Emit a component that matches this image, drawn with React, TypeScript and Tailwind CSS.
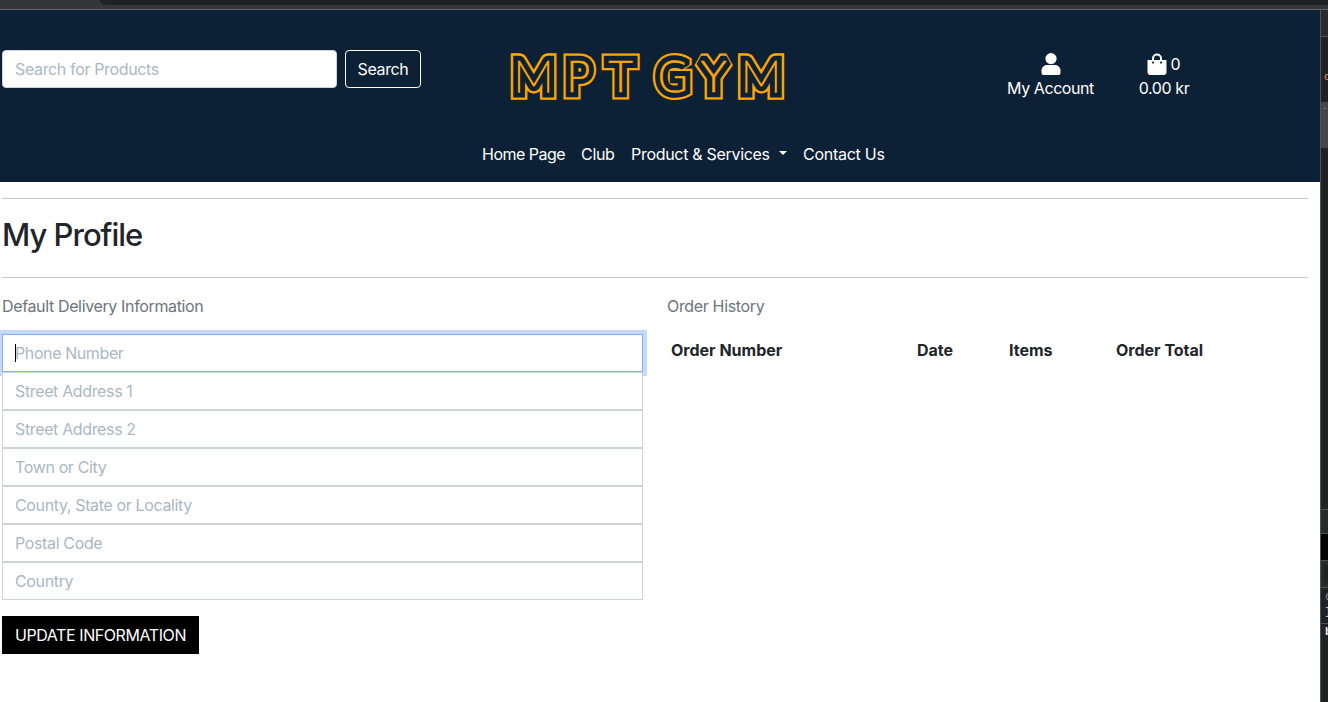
import React from "react";

const fields = ["Street Address 1", "Street Address 2", "Town or City", "County, State or Locality", "Postal Code", "Country"];

const letters = [
  { ch: "M", x: 533.5, font: "Lato", weight: 100, sx: 1.07, sy: 1.03, inner: 1.3 },
  { ch: "P", x: 578.5, font: "DejaVu Sans", weight: 200, sx: 1, sy: 1, inner: 0.5 },
  { ch: "T", x: 620.5, font: "DejaVu Sans", weight: 200, sx: 0.98, sy: 1, inner: 0.5 },
  { ch: "G", x: 673, font: "DejaVu Sans", weight: 200, sx: 1, sy: 1, inner: 0.5 },
  { ch: "Y", x: 713.5, font: "DejaVu Sans", weight: 200, sx: 1.06, sy: 1, inner: 0.5 },
  { ch: "M", x: 761, font: "Lato", weight: 100, sx: 1.08, sy: 1.03, inner: 1.3 },
];

function Logo() {
  return (
    <svg width="290" height="60" viewBox="503 46 290 60" role="img" aria-label="MPT GYM" fontSize="42" textAnchor="middle">
      {letters.map((l, i) => (
        <g key={i} transform={`translate(${l.x} 91.7) scale(${l.sx} ${l.sy})`} fontFamily={l.font} fontWeight={l.weight} strokeLinejoin="miter" strokeMiterlimit="1.5">
          <text fill="#ffa500" stroke="#ffa500" strokeWidth="15">{l.ch}</text>
          <text fill="#0c2135" stroke="#0c2135" strokeWidth="10.500">{l.ch}</text>
          <text fill="#ffa500" stroke="#ffa500" strokeWidth={l.inner}>{l.ch}</text>
        </g>
      ))}
    </svg>
  );
}

function Header() {
  return (
    <header className="h-[172px] bg-[#0c2135] text-white">
      <div className="flex h-[120px] items-start">
        <div className="flex w-[503px] gap-2 pl-0.5 pt-10">
          <input placeholder="Search for Products" className="h-[38px] w-[335px] rounded border border-[#ced4da] bg-white px-3 tracking-[-0.36px] placeholder:text-[#aab7c4] placeholder:opacity-100" />
          <button className="h-[38px] w-[76px] rounded border border-white tracking-[-0.36px]">Search</button>
        </div>
        <div className="w-[290px] pt-9"><Logo /></div>
        <div className="flex pl-[197px] pt-[42px] text-center leading-6">
          <div className="flex w-[121px] flex-col items-center">
            <svg width="20" height="24" viewBox="0 0 20 24" fill="currentColor"><circle cx="10" cy="6.600" r="5.600" /><path d="M6 13h8c3 0 5.500 2.500 5.500 5.500V21q0 2-2 2h-15q-2 0-2-2v-2.500C.5 15.500 3 13 6 13Z" /></svg>
            <span className="tracking-[-0.42px]">My Account</span>
          </div>
          <div className="flex w-[106px] flex-col items-center">
            <span className="flex items-center gap-[3px]"><svg width="20" height="24" viewBox="0 0 20 24" fill="currentColor"><path fillRule="evenodd" d="M.5 8H5V6.500a5 5 0 0 1 10 0V8h4.500v12q0 3-3 3h-13q-3 0-3-3ZM7 8h6V6.500a3 3 0 0 0-6 0ZM6 9.500a1 1 0 1 0 .01 0ZM14 9.500a1 1 0 1 0 .01 0Z" /></svg>0</span>
            <span className="tracking-[-0.4px]">0.00 kr</span>
          </div>
        </div>
      </div>
      <nav className="flex gap-4 pl-[482px] pt-3 leading-6 whitespace-nowrap">
        <a className="w-[83px] tracking-[-0.5px]">Home Page</a>
        <a className="w-[34px] tracking-[-0.3px]">Club</a>
        <a className="flex w-[156px] items-center justify-between tracking-[-0.3px]">Product &amp; Services<span className="mb-0.5 border-x-[4.800px] border-t-[4.800px] border-x-transparent" /></a>
        <a className="tracking-[-0.26px]">Contact Us</a>
      </nav>
    </header>
  );
}

function Profile() {
  return (
    <main className="pl-0.5 pr-3 pt-4 text-[#212529]">
      <hr className="border-[#c8c8c9]" />
      <h2 className="mt-4 h-[62px] text-[31px] leading-[40px] font-medium tracking-[-1px]">My Profile</h2>
      <hr className="border-[#c8c8c9]" />
      <div className="flex pt-4">
        <section className="w-[641px]">
          <p className="mb-4 leading-6 tracking-[-0.36px] text-[#6c757d]">Default Delivery Information</p>
          <div className="relative flex h-[38px] items-center border border-[#80b0fe] bg-white px-3 shadow-[0_0_0_4px_#c3dafd]">
            <span className="tracking-[-0.4px] text-[#aab7c4]">Phone Number</span>
            <span className="absolute left-3 top-[9px] h-[18px] w-px bg-black" />
          </div>
          {fields.map((f) => (
            <input key={f} placeholder={f} className="relative block h-[38px] w-full border border-[#ced4da] bg-white px-3 tracking-[-0.36px] placeholder:text-[#aab7c4] placeholder:opacity-100" />
          ))}
          <button className="mt-4 h-[38px] w-[197px] bg-black tracking-[-0.42px] whitespace-nowrap text-white">UPDATE INFORMATION</button>
        </section>
        <section className="ml-6 flex-1">
          <p className="leading-6 tracking-[-0.34px] text-[#6c757d]">Order History</p>
          <table className="mt-5 w-full table-fixed text-left leading-6">
            <thead>
              <tr>
                <th className="w-[246px] pl-1 font-bold">Order Number</th>
                <th className="w-[92px] pl-1 font-bold">Date</th>
                <th className="w-[107px] pl-1 font-bold">Items</th>
                <th className="pl-1 font-bold">Order Total</th>
              </tr>
            </thead>
          </table>
        </section>
      </div>
    </main>
  );
}

function Inspector() {
  return (
    <aside className="flex w-2 flex-col overflow-hidden border-l border-[#505155] bg-[#202124] font-['Liberation_Mono'] text-[11px]">
      <div className="h-[27px] border-b border-[#505155] bg-[#292a2d]" />
      <div className="h-[65px] pl-[3px] pt-[33px] leading-[14px] text-[#f29766]">c</div>
      <div className="h-[46px] bg-[#454545] pl-0.5 text-[#a0a0a0]">⋯</div>
      <div className="h-[361px]" />
      <div className="h-[25px] border-y border-[#505155] bg-[#292a2d]" />
      <div className="h-[26px] bg-black" />
      <div className="h-7 border-y border-[#505155] bg-[#292a2d] py-1 pl-[3px]"><div className="h-full bg-[#202124]" /></div>
      <div className="h-9 border-b border-[#505155] pl-1 pt-0.5 leading-[15px] text-[#8a8a8a]">6<div className="text-[#e0e0e0]">{"}"}</div></div>
      <div className="pl-1 font-bold leading-4 text-[#e8eaed]">b</div>
    </aside>
  );
}

export default function App() {
  return (
    <div className="flex h-[702px] w-[1328px] flex-col overflow-hidden bg-white font-['Inter',sans-serif] text-base">
      <div className="h-2.5 shrink-0 border-b border-[#626366] bg-[#35363a] pl-[100px]">
        <div className="h-[5px] rounded-bl-[10px] bg-[#202124]" />
      </div>
      <div className="flex min-h-0 flex-1">
        <div className="w-[1320px]"><Header /><Profile /></div>
        <Inspector />
      </div>
    </div>
  );
}
